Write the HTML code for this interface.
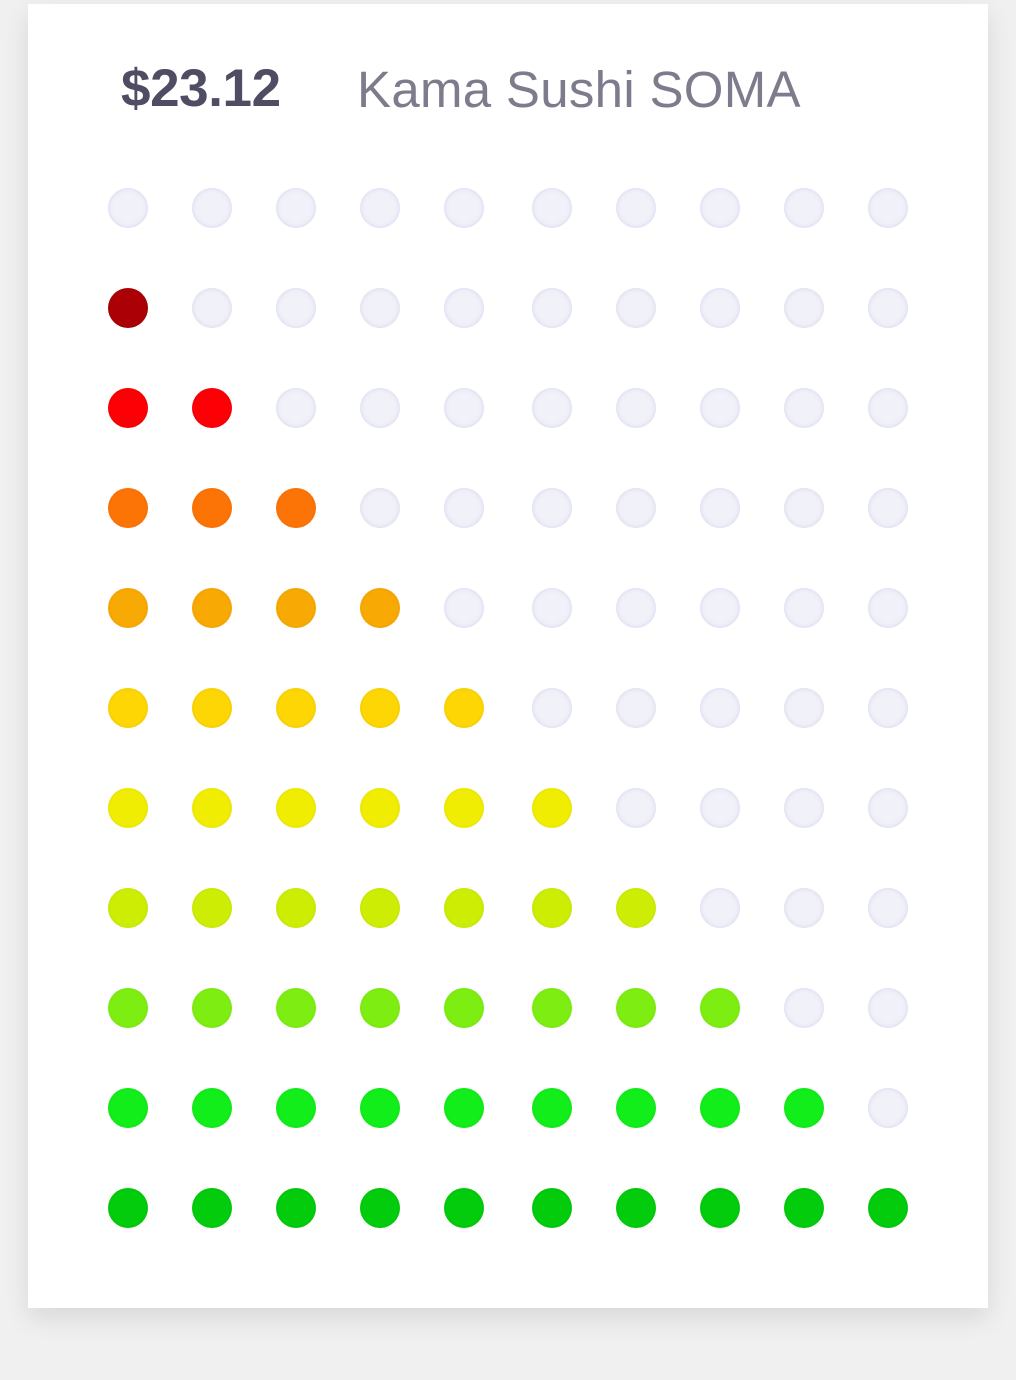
<!DOCTYPE html>
<html><head><meta charset="utf-8"><style>
html,body{margin:0;padding:0;background:#f0f0f0;width:1016px;height:1380px;overflow:hidden}
.card{position:absolute;left:28px;top:4px;width:960px;height:1304px;background:#fff;box-shadow:0 10px 24px rgba(0,0,0,0.10)}
.price{position:absolute;left:93px;top:54px;font:bold 53px "Liberation Sans",sans-serif;color:#4f4d63;letter-spacing:-0.4px}
.name{position:absolute;left:329px;top:56px;font:300 51px "Liberation Sans",sans-serif;color:#7d7c8c;letter-spacing:0.3px}
.row{position:absolute;left:0;width:960px;height:40px}
.d{position:absolute;top:0;width:40px;height:40px;border-radius:50%;background:#f1f1f9;box-shadow:inset 0 0 5px rgba(190,190,230,0.6)}
.d:nth-child(1){left:80px}.d:nth-child(2){left:164px}.d:nth-child(3){left:248px}.d:nth-child(4){left:332px}.d:nth-child(5){left:416px}
.d:nth-child(6){left:504px}.d:nth-child(7){left:588px}.d:nth-child(8){left:672px}.d:nth-child(9){left:756px}.d:nth-child(10){left:840px}
.c{box-shadow:inset 0 0 3px rgba(0,0,0,0.08)}
</style></head><body>
<div class="card">
<div class="price">$23.12</div>
<div class="name">Kama Sushi SOMA</div>
<div class="row" style="top:184px"><i class="d"></i><i class="d"></i><i class="d"></i><i class="d"></i><i class="d"></i><i class="d"></i><i class="d"></i><i class="d"></i><i class="d"></i><i class="d"></i></div>
<div class="row" style="top:284px"><i class="d c" style="background:#ab0006"></i><i class="d"></i><i class="d"></i><i class="d"></i><i class="d"></i><i class="d"></i><i class="d"></i><i class="d"></i><i class="d"></i><i class="d"></i></div>
<div class="row" style="top:384px"><i class="d c" style="background:#fc0006"></i><i class="d c" style="background:#fc0006"></i><i class="d"></i><i class="d"></i><i class="d"></i><i class="d"></i><i class="d"></i><i class="d"></i><i class="d"></i><i class="d"></i></div>
<div class="row" style="top:484px"><i class="d c" style="background:#fd7406"></i><i class="d c" style="background:#fd7406"></i><i class="d c" style="background:#fd7406"></i><i class="d"></i><i class="d"></i><i class="d"></i><i class="d"></i><i class="d"></i><i class="d"></i><i class="d"></i></div>
<div class="row" style="top:584px"><i class="d c" style="background:#f8a904"></i><i class="d c" style="background:#f8a904"></i><i class="d c" style="background:#f8a904"></i><i class="d c" style="background:#f8a904"></i><i class="d"></i><i class="d"></i><i class="d"></i><i class="d"></i><i class="d"></i><i class="d"></i></div>
<div class="row" style="top:684px"><i class="d c" style="background:#fdd604"></i><i class="d c" style="background:#fdd604"></i><i class="d c" style="background:#fdd604"></i><i class="d c" style="background:#fdd604"></i><i class="d c" style="background:#fdd604"></i><i class="d"></i><i class="d"></i><i class="d"></i><i class="d"></i><i class="d"></i></div>
<div class="row" style="top:784px"><i class="d c" style="background:#f1ed02"></i><i class="d c" style="background:#f1ed02"></i><i class="d c" style="background:#f1ed02"></i><i class="d c" style="background:#f1ed02"></i><i class="d c" style="background:#f1ed02"></i><i class="d c" style="background:#f1ed02"></i><i class="d"></i><i class="d"></i><i class="d"></i><i class="d"></i></div>
<div class="row" style="top:884px"><i class="d c" style="background:#cdee04"></i><i class="d c" style="background:#cdee04"></i><i class="d c" style="background:#cdee04"></i><i class="d c" style="background:#cdee04"></i><i class="d c" style="background:#cdee04"></i><i class="d c" style="background:#cdee04"></i><i class="d c" style="background:#cdee04"></i><i class="d"></i><i class="d"></i><i class="d"></i></div>
<div class="row" style="top:984px"><i class="d c" style="background:#7eee12"></i><i class="d c" style="background:#7eee12"></i><i class="d c" style="background:#7eee12"></i><i class="d c" style="background:#7eee12"></i><i class="d c" style="background:#7eee12"></i><i class="d c" style="background:#7eee12"></i><i class="d c" style="background:#7eee12"></i><i class="d c" style="background:#7eee12"></i><i class="d"></i><i class="d"></i></div>
<div class="row" style="top:1084px"><i class="d c" style="background:#12ee1a"></i><i class="d c" style="background:#12ee1a"></i><i class="d c" style="background:#12ee1a"></i><i class="d c" style="background:#12ee1a"></i><i class="d c" style="background:#12ee1a"></i><i class="d c" style="background:#12ee1a"></i><i class="d c" style="background:#12ee1a"></i><i class="d c" style="background:#12ee1a"></i><i class="d c" style="background:#12ee1a"></i><i class="d"></i></div>
<div class="row" style="top:1184px"><i class="d c" style="background:#02cc0c"></i><i class="d c" style="background:#02cc0c"></i><i class="d c" style="background:#02cc0c"></i><i class="d c" style="background:#02cc0c"></i><i class="d c" style="background:#02cc0c"></i><i class="d c" style="background:#02cc0c"></i><i class="d c" style="background:#02cc0c"></i><i class="d c" style="background:#02cc0c"></i><i class="d c" style="background:#02cc0c"></i><i class="d c" style="background:#02cc0c"></i></div>
</div>
</body></html>
